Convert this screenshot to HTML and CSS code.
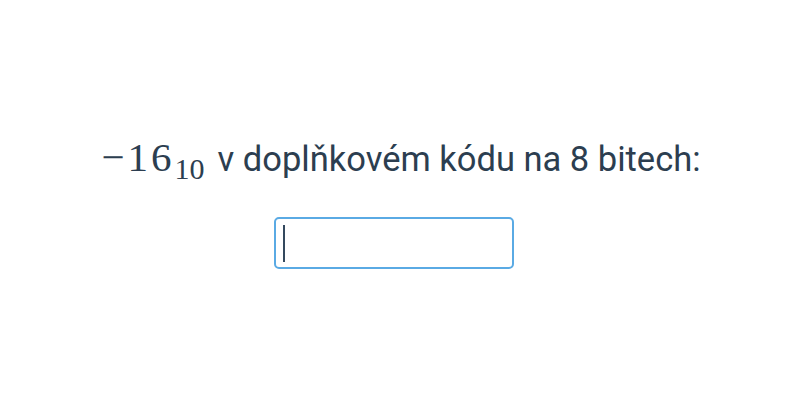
FILE: index.html
```html
<!DOCTYPE html>
<html>
<head>
    <title>Doplňkový kód</title>
    <link rel="stylesheet" href="styles.css">
</head>
<body>
    <div class="container">
        <div class="question">
            <span class="math">−16<sub>10</sub></span>
            <span class="label">v doplňkovém kódu na 8 bitech:</span>
        </div>
        <div class="field">
            <input class="answer" type="text" autofocus>
            <span class="caret"></span>
        </div>
    </div>
</body>
</html>
```

FILE: styles.css
```css
body {
    font-family: Roboto, "Noto Sans", sans-serif;
    margin: 0;
    background-color: #ffffff;
    color: #2c3e50;
}

.container {
    display: flex;
    flex-direction: column;
    align-items: center;
    padding-top: 132px;
}

.question {
    font-size: 34.5px;
    line-height: 50px;
    display: flex;
    align-items: baseline;
    gap: 13px;
    margin-left: 2px;
}

.math {
    font-family: "Liberation Serif", serif;
    font-size: 41px;
    letter-spacing: 3px;
}

.math sub {
    font-size: 30px;
    vertical-align: -8px;
    line-height: 0;
    letter-spacing: 0;
}

.field {
    position: relative;
    margin-top: 33px;
    margin-right: 12px;
}

.answer {
    display: block;
    width: 240px;
    height: 52px;
    box-sizing: border-box;
    border: 2px solid #5aaae4;
    border-radius: 5px;
    padding: 0 8px;
    font-family: Roboto, sans-serif;
    font-size: 32px;
    color: #2c3e50;
    caret-color: transparent;
    outline: none;
}

.caret {
    position: absolute;
    left: 9px;
    top: 8px;
    width: 2px;
    height: 37px;
    background-color: #34495e;
}
```
